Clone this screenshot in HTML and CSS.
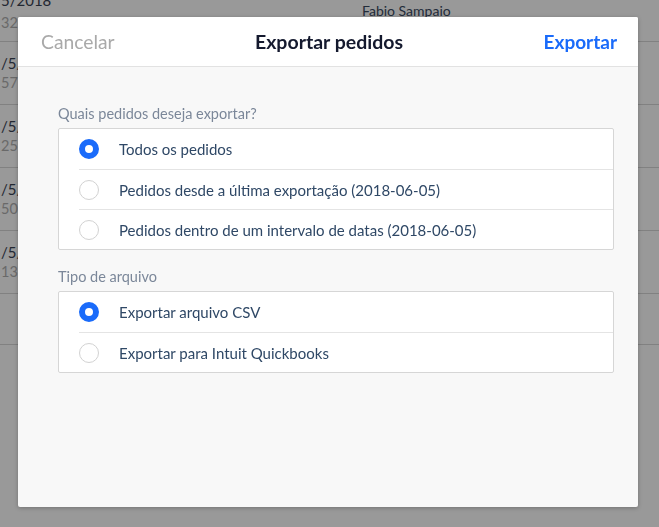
FILE: index.html
```html
<!DOCTYPE html>
<html lang="pt">
<head>
<meta charset="utf-8">
<title>Exportar pedidos</title>
<link rel="stylesheet" href="styles.css">
</head>
<body>
<div class="page">
  <div class="list">
    <div class="row row-first"><div class="cell-left shift"><div class="date">5/2018</div><div class="num">32</div></div><div class="cell-name">Fabio Sampaio</div></div>
    <div class="row"><div class="cell-left"><div class="date">/5/2018</div><div class="num">57</div></div></div>
    <div class="row"><div class="cell-left"><div class="date">/5/2018</div><div class="num">25</div></div></div>
    <div class="row"><div class="cell-left"><div class="date">/5/2018</div><div class="num">50</div></div></div>
    <div class="row"><div class="cell-left"><div class="date">/5/2018</div><div class="num">13</div></div></div>
    <div class="row row-short"></div>
  </div>
</div>
<div class="overlay"></div>
<div class="modal">
  <div class="modal-header">
    <span class="btn-cancel">Cancelar</span>
    <span class="modal-title">Exportar pedidos</span>
    <span class="btn-export">Exportar</span>
  </div>
  <div class="modal-body">
    <div class="section">
      <div class="section-label">Quais pedidos deseja exportar?</div>
      <div class="card">
        <div class="option"><span class="radio checked"></span><span class="option-text">Todos os pedidos</span></div>
        <div class="option"><span class="radio"></span><span class="option-text">Pedidos desde a última exportação (2018-06-05)</span></div>
        <div class="option"><span class="radio"></span><span class="option-text">Pedidos dentro de um intervalo de datas (2018-06-05)</span></div>
      </div>
    </div>
    <div class="section">
      <div class="section-label">Tipo de arquivo</div>
      <div class="card">
        <div class="option"><span class="radio checked"></span><span class="option-text">Exportar arquivo CSV</span></div>
        <div class="option"><span class="radio"></span><span class="option-text">Exportar para Intuit Quickbooks</span></div>
      </div>
    </div>
  </div>
</div>
</body>
</html>
```
FILE: styles.css
```css
html, body {
  margin: 0;
  padding: 0;
  height: 100%;
  overflow: hidden;
}
body {
  font-family: Lato, "Open Sans", Arial, sans-serif;
  background: #ffffff;
}
.page {
  height: 100%;
}
.row {
  height: 62px;
  border-bottom: 1px solid #d8d8d8;
  display: flex;
  align-items: flex-start;
}
.row-first {
  height: 41px;
}
.row-short {
  height: 50px;
}
.cell-left {
  margin-left: 1px;
  width: 360px;
  padding-top: 11px;
}
.row-first .cell-left {
  padding-top: 0;
  margin-top: -10px;
}
.date {
  font-size: 15px;
  color: #3a4354;
  line-height: 20px;
}
.num {
  font-size: 14.5px;
  color: #b0b0b0;
  line-height: 20px;
}
.row-first .num {
  margin-top: 3px;
}
.cell-name {
  margin-left: 1px;
  padding-top: 2px;
  font-size: 14px;
  color: #3a4a62;
}
.overlay {
  position: fixed;
  inset: 0;
  background: rgba(0, 0, 0, 0.4);
}
.modal {
  position: absolute;
  left: 18px;
  top: 17px;
  width: 620px;
  height: 490px;
  background: #f8f8f8;
  border-radius: 2px;
  box-shadow: 0 1px 4px rgba(0, 0, 0, 0.25);
  display: flex;
  flex-direction: column;
  overflow: hidden;
}
.modal-header {
  height: 49px;
  background: #ffffff;
  border-bottom: 1px solid #e2e2e2;
  display: flex;
  align-items: center;
  justify-content: space-between;
  padding: 0 21px 0 23px;
  flex-shrink: 0;
}
.btn-cancel {
  font-size: 19.3px;
  color: #a9a9a9;
  width: 130px;
}
.modal-title {
  font-size: 19.5px;
  font-weight: 700;
  color: #14192e;
}
.btn-export {
  font-size: 19px;
  font-weight: 700;
  color: #1a6bfa;
  width: 130px;
  text-align: right;
}
.modal-body {
  padding: 37px 24px 0 40px;
  display: flex;
  flex-direction: column;
  gap: 17px;
}
.section-label {
  font-size: 14.5px;
  color: #7b8799;
  line-height: 20px;
  margin-bottom: 4px;
}
.card {
  background: #ffffff;
  border: 1px solid #d6d6d6;
  border-radius: 2px;
}
.option {
  height: 40px;
  box-sizing: border-box;
  display: flex;
  align-items: center;
  padding-left: 20px;
}
.option + .option {
  border-top: 1px solid #e4e4e4;
  margin-left: 20px;
  padding-left: 0;
}
.radio {
  width: 20px;
  height: 20px;
  box-sizing: border-box;
  border: 1.5px solid #d2d2d2;
  border-radius: 50%;
  background: #ffffff;
  flex-shrink: 0;
  margin-right: 20px;
}
.radio.checked {
  border: 6.5px solid #1a6bfa;
}
.option-text {
  font-size: 15px;
  color: #2f4866;
}
```
